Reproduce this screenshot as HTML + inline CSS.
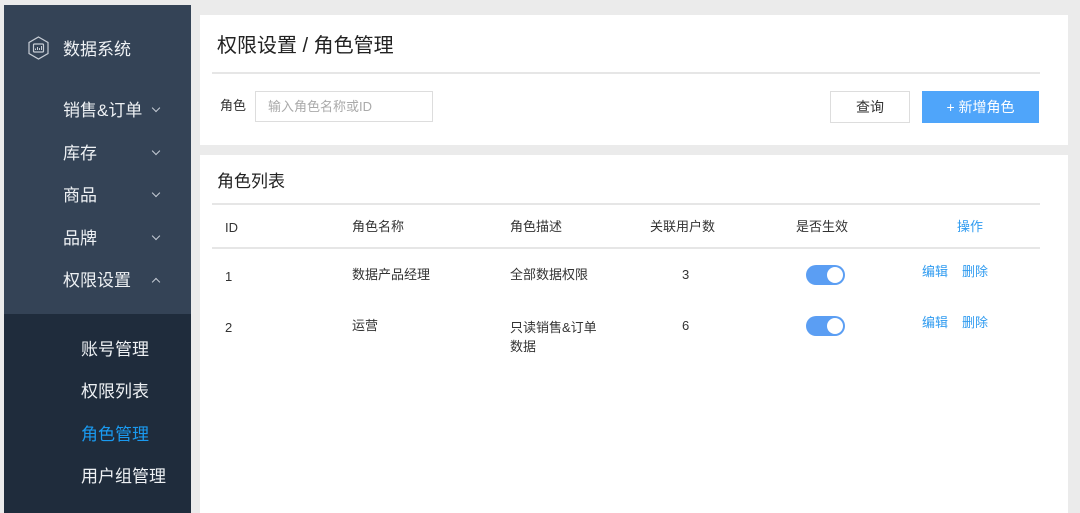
<!DOCTYPE html>
<html><head><meta charset="utf-8"><style>
*{margin:0;padding:0;box-sizing:border-box}
body{width:1080px;height:513px;overflow:hidden;background:#ebebeb;position:relative;font-family:"Liberation Sans","Noto Sans CJK SC",sans-serif;color:#333}
.a{position:absolute;white-space:nowrap}
.side{position:absolute;left:4px;top:5px;width:187px;height:508px;background:#344356}
.sub{position:absolute;left:4px;top:314px;width:187px;height:199px;background:#1f2c3c}
.mi{position:absolute;color:#eef1f4;font-size:17px;line-height:20px}
.chev{position:absolute;left:153px;width:6px;height:6px;border-right:1px solid #c5ccd5;border-bottom:1px solid #c5ccd5;transform:rotate(45deg)}
.p{position:absolute;background:#fff;left:200px;width:868px}
.line{position:absolute;left:212px;width:828px;height:2px;background:#e6e6e6}
.t{font-size:13px;line-height:16px;color:#333}
.tog{position:absolute;left:806px;width:39px;height:20px;border-radius:10px;background:#5b9ef3}
.tog:after{content:"";position:absolute;right:2px;top:2px;width:16px;height:16px;border-radius:50%;background:#fff}
.blue{color:#2f9bf0}
</style></head><body>
<div class="side"></div>
<div class="sub"></div>
<svg class="a" style="left:27px;top:36px" width="23" height="24" viewBox="0 0 23 24"><polygon points="11.5,1 21,6.5 21,17.5 11.5,23 2,17.5 2,6.5" fill="none" stroke="#c8ced6" stroke-width="1.2"/><rect x="6.5" y="8" width="10" height="8" rx="1" fill="none" stroke="#c8ced6" stroke-width="1.2"/><path d="M8.5 14v-1.5M10.5 14v-3M12.5 14v-2M14.5 14v-4" stroke="#c8ced6"/></svg>
<div class="mi a" style="left:63px;top:40px">数据系统</div>
<div class="mi a" style="left:63px;top:101px">销售&amp;订单</div><div class="chev" style="top:105px"></div>
<div class="mi a" style="left:63px;top:144px">库存</div><div class="chev" style="top:148px"></div>
<div class="mi a" style="left:63px;top:186px">商品</div><div class="chev" style="top:190px"></div>
<div class="mi a" style="left:63px;top:271px">权限设置</div>
<div class="mi a" style="left:63px;top:229px">品牌</div><div class="chev" style="top:233px"></div>
<div class="chev" style="top:279px;transform:rotate(225deg)"></div>
<div class="mi a" style="left:81px;top:340px">账号管理</div>
<div class="mi a" style="left:81px;top:382px">权限列表</div>
<div class="mi a" style="left:81px;top:425px;color:#1a9af0">角色管理</div>
<div class="mi a" style="left:81px;top:467px">用户组管理</div>

<div class="p" style="top:15px;height:130px"></div>
<div class="p" style="top:155px;height:358px"></div>
<div class="a" style="left:217px;top:34px;font-size:20px;line-height:24px;color:#222">权限设置 / 角色管理</div>
<div class="line" style="top:72px"></div>
<div class="a t" style="left:220px;top:98px">角色</div>
<div class="a" style="left:255px;top:91px;width:178px;height:31px;border:1px solid #ddd"></div>
<div class="a t" style="left:268px;top:99px;color:#aaa">输入角色名称或ID</div>
<div class="a t" style="left:830px;top:91px;width:80px;height:32px;border:1px solid #ddd;text-align:center;line-height:30px;font-size:14px">查询</div>
<div class="a" style="left:922px;top:91px;width:117px;height:32px;background:#4fa5fa;color:#fff;text-align:center;line-height:32px;font-size:14px">+ 新增角色</div>

<div class="a" style="left:217px;top:172px;font-size:17px;line-height:20px;color:#222">角色列表</div>
<div class="line" style="top:203px"></div>
<div class="line" style="top:247px"></div>
<div class="a t" style="left:225px;top:220px">ID</div>
<div class="a t" style="left:352px;top:219px">角色名称</div>
<div class="a t" style="left:510px;top:219px">角色描述</div>
<div class="a t" style="left:650px;top:219px">关联用户数</div>
<div class="a t" style="left:796px;top:219px">是否生效</div>
<div class="a t blue" style="left:957px;top:219px">操作</div>

<div class="a t" style="left:225px;top:269px">1</div>
<div class="a t" style="left:352px;top:267px">数据产品经理</div>
<div class="a t" style="left:510px;top:267px">全部数据权限</div>
<div class="a t" style="left:682px;top:267px">3</div>
<div class="tog" style="top:265px"></div>
<div class="a t blue" style="left:922px;top:264px">编辑</div>
<div class="a t blue" style="left:962px;top:264px">删除</div>

<div class="a t" style="left:225px;top:320px">2</div>
<div class="a t" style="left:352px;top:318px">运营</div>
<div class="a t" style="left:510px;top:318px;line-height:19px">只读销售&amp;订单<br>数据</div>
<div class="a t" style="left:682px;top:318px">6</div>
<div class="tog" style="top:316px"></div>
<div class="a t blue" style="left:922px;top:315px">编辑</div>
<div class="a t blue" style="left:962px;top:315px">删除</div>
</body></html>
